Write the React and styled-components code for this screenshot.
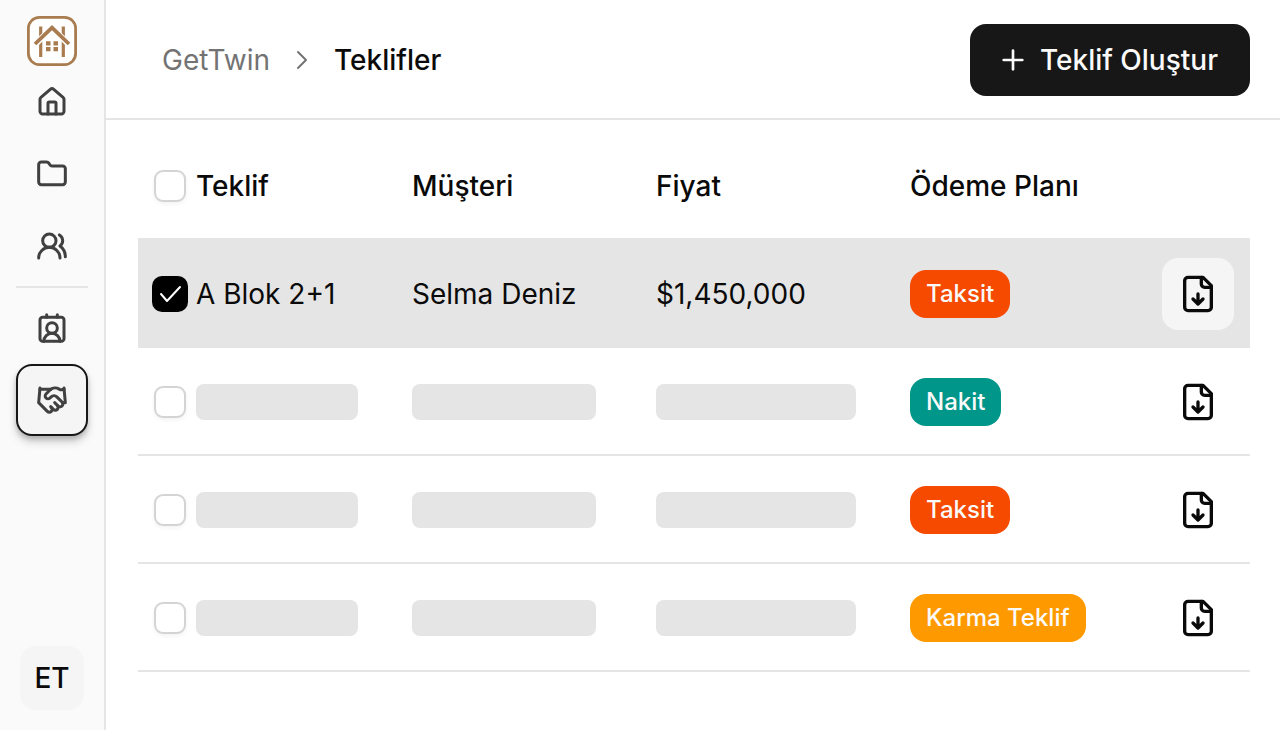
import React, { useState } from 'react'
import styled, { createGlobalStyle, css } from 'styled-components'
import {
    House, Folder, UsersRound, ContactRound, Handshake, ChevronRight, Plus
} from 'lucide-react'

const GlobalStyle = createGlobalStyle`
    * {
        box-sizing: border-box;
    }
    body {
        margin: 0;
        background-color: #ffffff;
        color: #0a0a0a;
        font-family: Inter, "Liberation Sans", sans-serif;
        font-size: 28px;
        line-height: 36px;
    }
    button, input {
        font: inherit;
        color: inherit;
        margin: 0;
    }
`

const Page = styled.div`
    display: flex;
    min-height: 100vh;
`

const Sidebar = styled.aside`
    display: flex;
    flex-direction: column;
    align-items: center;
    flex: none;
    padding: 16px 16px 20px;
    background-color: #fafafa;
    border-right: 2px solid #e5e5e5;
`

const Nav = styled.nav`
    display: flex;
    flex-direction: column;
`

const Divider = styled.hr`
    width: 100%;
    height: 2px;
    margin: 4px 0;
    border: none;
    background-color: #e5e5e5;
`

const NavLink = styled.a`
    display: flex;
    align-items: center;
    justify-content: center;
    width: 72px;
    height: 72px;
    border-radius: 16px;
    color: #404040;
    ${props => props.$active && css`
        background-color: #f5f5f5;
        border: 2px solid #171717;
        box-shadow: 0 6px 8px rgba(0, 0, 0, 0.18), 0 3px 4px rgba(0, 0, 0, 0.14);
    `}
`

const Avatar = styled.button`
    width: 64px;
    height: 64px;
    margin-top: auto;
    padding: 0;
    border: none;
    border-radius: 16px;
    background-color: #f5f5f5;
    font-weight: 500;
`

const Main = styled.main`
    flex: 1;
    min-width: 0;
`

const Header = styled.header`
    display: flex;
    align-items: center;
    justify-content: space-between;
    padding: 24px 30px 22px 56px;
    border-bottom: 2px solid #e5e5e5;
`

const Breadcrumb = styled.nav`
    display: flex;
    align-items: center;
    gap: 16px;
    color: #737373;
`

const Crumb = styled.a`
    color: inherit;
    text-decoration: none;
`

const CurrentCrumb = styled.span`
    color: #0a0a0a;
    font-weight: 500;
`

const CreateButton = styled.button`
    display: flex;
    align-items: center;
    gap: 11px;
    height: 72px;
    padding: 0 32px 0 27px;
    border: none;
    border-radius: 16px;
    background-color: #171717;
    color: #fafafa;
    font-weight: 500;
`

const TableArea = styled.section`
    padding: 12px 30px 32px 32px;
`

const Table = styled.table`
    width: 100%;
    table-layout: fixed;
    border-spacing: 0;
    text-align: left;
`

const Row = styled.tr`
    height: 108px;
    background-color: ${props => props.$selected ? '#e5e5e5' : 'transparent'};
`

const HeadCell = styled.th`
    width: ${props => props.$width || 'auto'};
    padding: 2px 0 0;
    border-bottom: 2px solid #e5e5e5;
    font-weight: 500;
`

const Cell = styled.td`
    padding: 2px 0 0;
    border-bottom: 2px solid #e5e5e5;
`

const CheckLabel = styled.label`
    position: relative;
    display: block;
    width: 32px;
    height: 32px;
    margin-left: 16px;
`

const CheckInput = styled.input`
    appearance: none;
    display: block;
    width: 32px;
    height: 32px;
    border: 2px solid #d4d4d4;
    border-radius: 9px;
    background-color: #ffffff;
    box-shadow: 0 2px 4px rgba(0, 0, 0, 0.05);
    &:checked {
        border-color: #000000;
        border-radius: 8px;
        background-color: #000000;
        box-shadow: 0 0 0 2px #000000;
    }
`

const CheckMark = styled.svg`
    position: absolute;
    inset: 0;
    pointer-events: none;
`

const Skeleton = styled.div`
    width: ${props => props.$width};
    height: 36px;
    border-radius: 8px;
    background-color: #e5e5e5;
`

const badgeColors = {
    Taksit: '#f54a00',
    Nakit: '#009689',
    'Karma Teklif': '#fe9a00',
}

const Badge = styled.span`
    display: inline-block;
    padding: 0 16px;
    border-radius: 16px;
    background-color: ${props => badgeColors[props.$plan]};
    color: #fafafa;
    font-size: 24px;
    font-weight: 500;
    line-height: 48px;
    vertical-align: middle;
    white-space: nowrap;
`

const DownloadButton = styled.button`
    display: flex;
    align-items: center;
    justify-content: center;
    width: 72px;
    height: 72px;
    margin-left: 16px;
    padding: 0;
    border: none;
    border-radius: 16px;
    background-color: ${props => props.$selected ? '#f5f5f5' : 'transparent'};
`

const columns = [
    { title: 'Teklif', width: '216px' },
    { title: 'Müşteri', width: '244px' },
    { title: 'Fiyat', width: '254px' },
    { title: 'Ödeme Planı' },
]

const offers = [
    { id: 1, name: 'A Blok 2+1', customer: 'Selma Deniz', price: '$1,450,000', plan: 'Taksit' },
    { id: 2, plan: 'Nakit' },
    { id: 3, plan: 'Taksit' },
    { id: 4, plan: 'Karma Teklif' },
]

const navIcon = { size: 32, strokeWidth: 2.25 }

const Logo = () => (
    <svg width="50" height="50" viewBox="0 0 50 50" fill="none" stroke="#a97c50" role="img" aria-label="GetTwin">
        <rect x="1.4" y="1.4" width="47.2" height="47.2" rx="11" fill="#ffffff" strokeWidth="2.8" />
        <path d="M13.7 10.5V41M36.3 10.5V41" strokeWidth="3.2" />
        <path d="M8.5 28 25 12l16.5 16" stroke="#ffffff" strokeWidth="6" />
        <path d="M8 28 25 11.7 42 28" strokeWidth="3.8" />
        <path d="M19 27.3h4.5M26.5 27.3H31M19 33.2h4.5M26.5 33.2H31" strokeWidth="4.2" />
    </svg>
)

const FileIcon = () => (
    <svg width="40" height="40" viewBox="0 0 24 24" fill="none" stroke="currentColor"
        strokeWidth="2" strokeLinecap="round" strokeLinejoin="round">
        <path d="M15 2H6a2 2 0 0 0-2 2v16a2 2 0 0 0 2 2h12a2 2 0 0 0 2-2V7Z" />
        <path d="M14 2v4a2 2 0 0 0 2 2h4" />
        <path d="M12 18v-6M9 15l3 3 3-3" />
    </svg>
)

const Checkbox = ({ label, checked, onChange }) => (
    <CheckLabel>
        <CheckInput type="checkbox" aria-label={label} checked={checked} onChange={onChange} />
        {checked && (
            <CheckMark width="32" height="32" viewBox="0 0 32 32" fill="none" stroke="#ffffff"
                strokeWidth="2" strokeLinecap="round" strokeLinejoin="round">
                <path d="m7 16 6 7L26 9" />
            </CheckMark>
        )}
    </CheckLabel>
)

const App = () => {
    const [selected, setSelected] = useState([1])

    const toggle = (id) => {
        setSelected(selected.includes(id)
            ? selected.filter(other => other !== id)
            : [...selected, id])
    }

    const allSelected = selected.length === offers.length
    const toggleAll = () => setSelected(allSelected ? [] : offers.map(offer => offer.id))

    return (
        <Page>
            <GlobalStyle />
            <Sidebar>
                <Logo />
                <Nav>
                    <NavLink href="#home" aria-label="Ana Sayfa"><House {...navIcon} /></NavLink>
                    <NavLink href="#projects" aria-label="Projeler"><Folder {...navIcon} /></NavLink>
                    <NavLink href="#users" aria-label="Kullanıcılar"><UsersRound {...navIcon} /></NavLink>
                    <Divider />
                    <NavLink href="#customers" aria-label="Müşteriler"><ContactRound {...navIcon} /></NavLink>
                    <NavLink href="#offers" aria-label="Teklifler" $active><Handshake {...navIcon} /></NavLink>
                </Nav>
                <Avatar>ET</Avatar>
            </Sidebar>
            <Main>
                <Header>
                    <Breadcrumb>
                        <Crumb href="#home">GetTwin</Crumb>
                        <ChevronRight size={32} strokeWidth={1.5} />
                        <CurrentCrumb>Teklifler</CurrentCrumb>
                    </Breadcrumb>
                    <CreateButton>
                        <Plus size={32} />
                        Teklif Oluştur
                    </CreateButton>
                </Header>
                <TableArea>
                    <Table>
                        <thead>
                            <Row>
                                <HeadCell $width="58px">
                                    <Checkbox label="Tümünü seç" checked={allSelected} onChange={toggleAll} />
                                </HeadCell>
                                {columns.map(column =>
                                    <HeadCell key={column.title} $width={column.width}>{column.title}</HeadCell>
                                )}
                                <HeadCell $width="104px" />
                            </Row>
                        </thead>
                        <tbody>
                            {offers.map(offer => {
                                const isSelected = selected.includes(offer.id)
                                return (
                                    <Row key={offer.id} $selected={isSelected}>
                                        <Cell>
                                            <Checkbox label="Teklifi seç" checked={isSelected}
                                                onChange={() => toggle(offer.id)} />
                                        </Cell>
                                        <Cell>{offer.name || <Skeleton $width="162px" />}</Cell>
                                        <Cell>{offer.customer || <Skeleton $width="184px" />}</Cell>
                                        <Cell>{offer.price || <Skeleton $width="200px" />}</Cell>
                                        <Cell><Badge $plan={offer.plan}>{offer.plan}</Badge></Cell>
                                        <Cell>
                                            <DownloadButton aria-label="Teklifi indir" $selected={isSelected}>
                                                <FileIcon />
                                            </DownloadButton>
                                        </Cell>
                                    </Row>
                                )
                            })}
                        </tbody>
                    </Table>
                </TableArea>
            </Main>
        </Page>
    )
}

export default App
